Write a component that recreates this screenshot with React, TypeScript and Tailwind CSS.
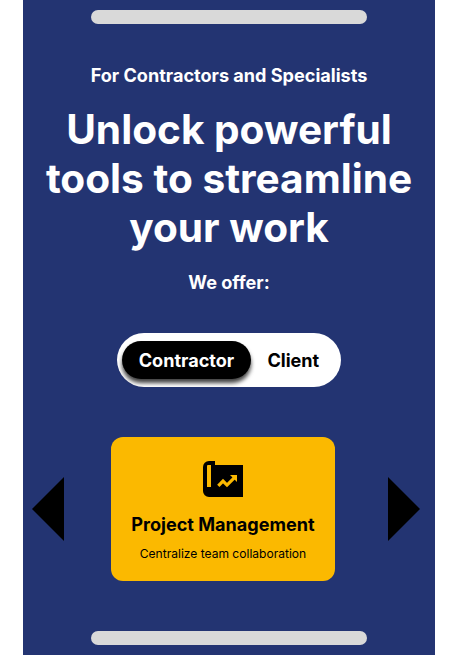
function ProjectIcon() {
  return (
    <svg width="40" height="36" viewBox="0 0 40 36" aria-hidden="true">
      <path
        fill="#000"
        fillRule="evenodd"
        d="M6 0H12V4H40V36H6A6 6 0 0 1 0 30V6A6 6 0 0 1 6 0ZM5 4A1 1 0 0 0 4 5V26H8V4Z"
      />
      <path d="M15.3 24.8L20 20.1L24 24.1L32 16.1" fill="none" stroke="#fbb900" strokeWidth="3.2" />
      <path d="M27 14H34V21Z" fill="#fbb900" />
    </svg>
  );
}

function Bar() {
  return <div className="h-3.5 w-[275.4px] shrink-0 rounded-full bg-[#d9d9d9]" />;
}

export default function App() {
  return (
    <div className="flex h-[655px] w-[458px] justify-center overflow-hidden bg-white font-['Inter',sans-serif]">
      <main className="flex w-[412px] flex-col items-center bg-[#233472] pt-2.5 text-white">
        <Bar />
        <p className="mt-10 text-[18.08px] leading-[22px] font-bold whitespace-nowrap">For Contractors and Specialists</p>
        <h1 className="mt-[19px] text-center text-[40.6px] leading-[49px] font-bold whitespace-nowrap">
          Unlock powerful
          <br />
          tools to streamline
          <br />
          your work
        </h1>
        <p className="mt-[19px] text-[18.08px] leading-[22px] font-bold">We offer:</p>
        <div className="mt-10 flex h-[54px] w-56 items-center rounded-full bg-white pl-[5px] text-[18.08px] leading-[22px] font-bold">
          <button className="h-[38px] w-[129px] rounded-full bg-black text-white shadow-[0_4px_4px_rgba(0,0,0,0.75)]">
            Contractor
          </button>
          <button className="ml-[16.4px] text-black">Client</button>
        </div>
        <div className="mt-[50px] flex w-full items-center justify-between pr-[15px] pl-[9px]">
          <svg width="32" height="64" viewBox="0 0 32 64" aria-label="Previous">
            <path d="M32 0V64L0 32Z" />
          </svg>
          <section className="mr-1.5 flex h-36 w-56 flex-col items-center rounded-xl bg-[#fbb900] pt-6 text-black">
            <ProjectIcon />
            <h2 className="mt-4 text-[18.08px] leading-[22px] font-bold whitespace-nowrap">Project Management</h2>
            <p className="mt-[11px] text-[12.05px] leading-[15px] whitespace-nowrap">Centralize team collaboration</p>
          </section>
          <svg width="32" height="64" viewBox="0 0 32 64" aria-label="Next">
            <path d="M0 0V64L32 32Z" />
          </svg>
        </div>
        <div className="mt-[50px]">
          <Bar />
        </div>
      </main>
    </div>
  );
}
